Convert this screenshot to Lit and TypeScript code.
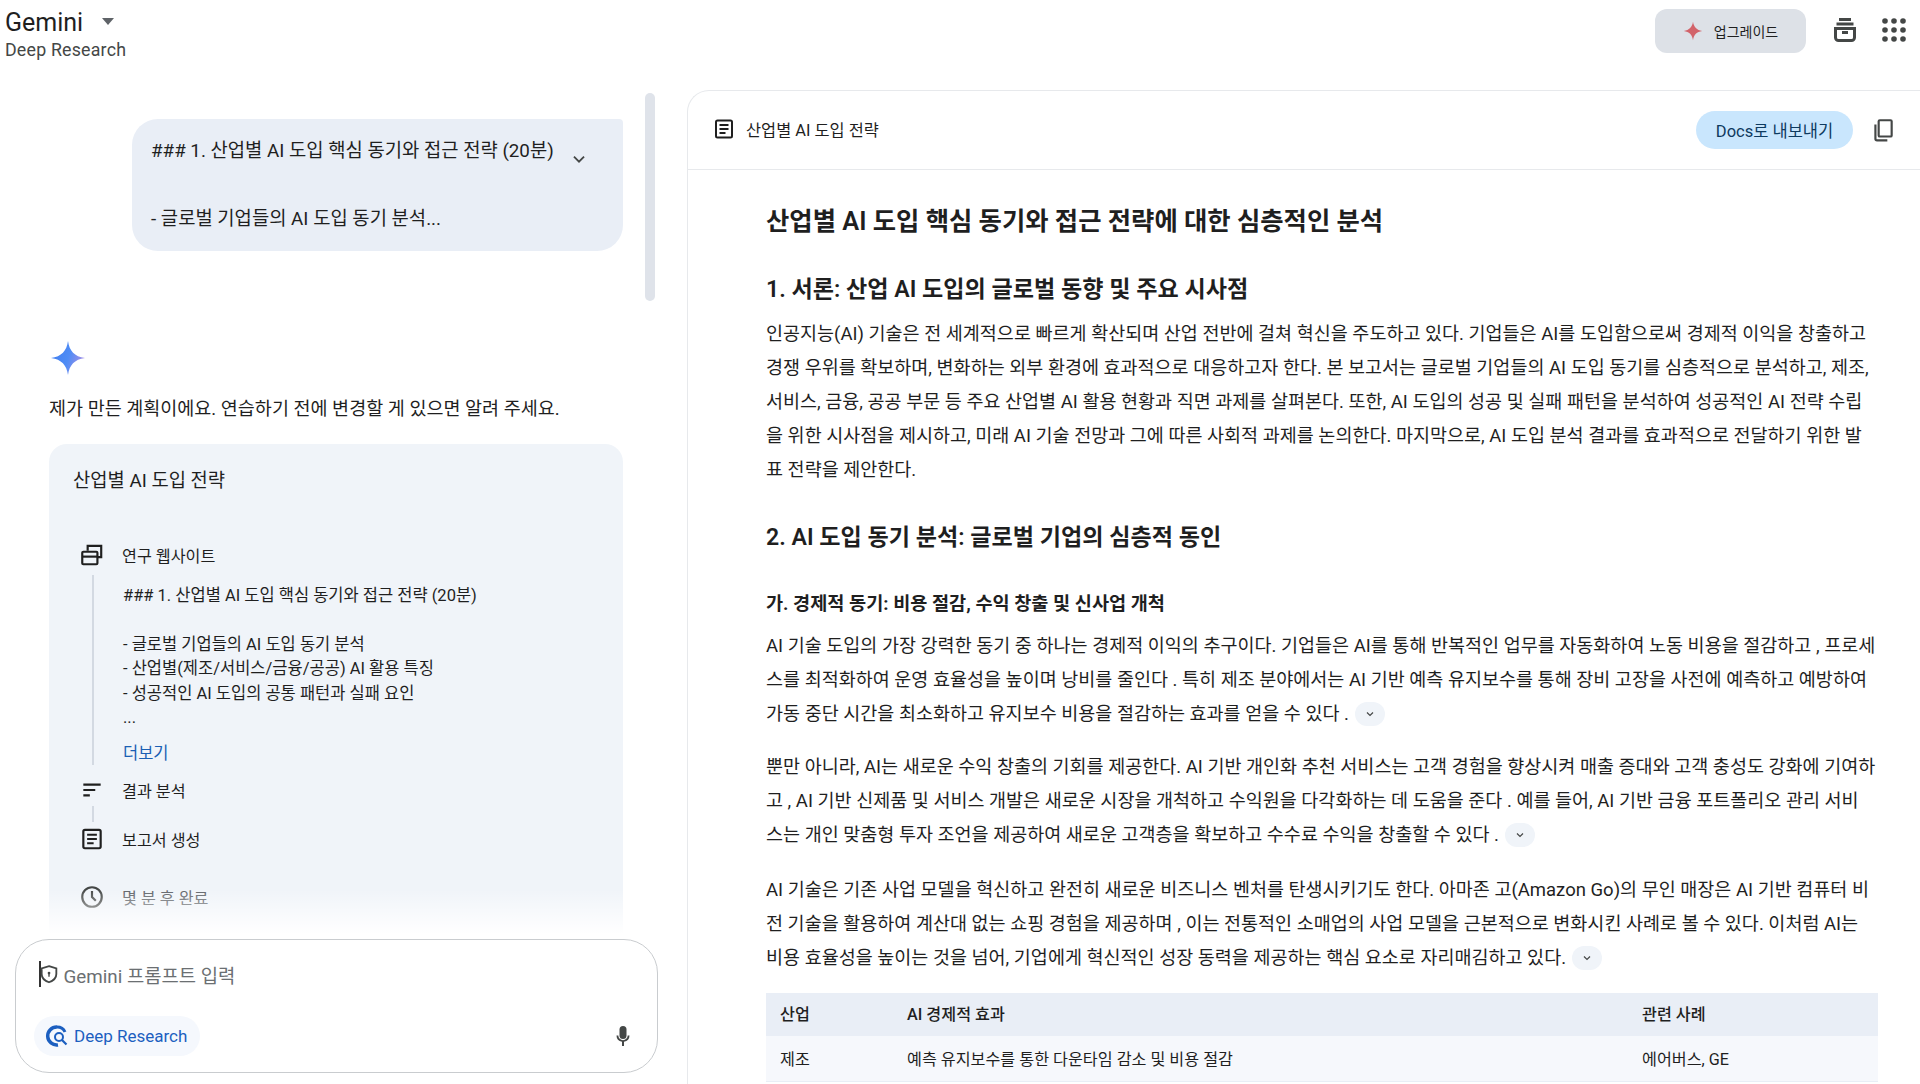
import { LitElement, html, css, svg } from "lit";
import { customElement } from "lit/decorators.js";

const chev = html`<svg class="chev" viewBox="0 0 12 12"><path d="M3 4.5 6 7.5 9 4.5" fill="none" stroke="#444746" stroke-width="1.2"/></svg>`;
const chip = html`<span class="chip">${chev}</span>`;
const docIcon = svg`<rect x="4" y="3.5" width="16" height="17" rx="1.5" fill="none" stroke="#1f1f1f" stroke-width="2"/><path d="M7.5 8h9M7.5 12h9M7.5 16h6" stroke="#1f1f1f" stroke-width="1.8"/>`;

@customElement("app-root")
export class AppRoot extends LitElement {
  static styles = css`
    :host { display: block; width: 1920px; height: 1084px; overflow: hidden; background: #fff; color: #1f1f1f;
      font-family: Roboto, "Noto Sans CJK KR", sans-serif; }
    svg { display: block; flex: none; }
    .page { display: grid; grid-template-rows: 90px 994px; height: 1084px; }
    .top { display: flex; justify-content: space-between; padding: 9px 12px 0 5px; }
    .brand-row { display: flex; align-items: center; gap: 18px; height: 26px; font-size: 25px; color: #1f1f1f; }
    .brand-sub { font-size: 17.800px; color: #444746; margin-top: 4px; letter-spacing: .2px; }
    .top-right { display: flex; align-items: flex-start; }
    .upgrade { width: 151px; height: 44px; border-radius: 12px; background: #dde1e7; display: flex; align-items: center; justify-content: center; gap: 11px; font-size: 14px; color: #1f1f1f; margin-right: 25px; }
    .tray { margin: 7px 21px 0 0; }
    .apps { margin-top: 7px; }
    .main { display: grid; grid-template-columns: 687px 1233px; min-height: 0; }
    .left { position: relative; display: flex; flex-direction: column; min-height: 0; }
    .chat { flex: 1; min-height: 0; overflow: hidden; padding: 29px 0 0 49px; width: 574px; }
    .scrollbar { position: absolute; left: 645px; top: 3px; width: 10px; height: 208px; border-radius: 5px; background: #dfe3ea; }
    .bubble { margin-left: 83px; width: 491px; height: 132px; box-sizing: border-box; background: #e9eef6; border-radius: 26px 4px 26px 26px; padding: 19px 19px; font-size: 18.800px; line-height: 27px; position: relative; display: flex; flex-direction: column; gap: 35.500px; }
    .bubble-first { display: flex; gap: 14px; white-space: nowrap; }
    .bubble-first svg { width: 22px; height: 22px; margin-top: 10px; }
    .spark { margin: 89px 0 0 2px; }
    .intro { font-size: 18.500px; line-height: 26px; margin-top: 20px; white-space: nowrap; }
    .card { margin-top: 22px; background: #f0f4f9; border-radius: 18px 18px 0 0; padding: 23px 24px 0; height: 490px; position: relative; box-sizing: border-box; }
    .card::after { content: ""; position: absolute; left: 0; right: 0; bottom: 0; height: 64px; background: linear-gradient(#f0f4f900, #f0f4f900 30%, #fff 100%); }
    .card-title { font-size: 18.750px; line-height: 28px; }
    .step { display: grid; grid-template-columns: 42px 1fr; align-items: center; font-size: 16.200px; height: 24px; margin-left: 7px; }
    .step svg { width: 26px; height: 26px; margin-left: -1px; }
    .s1 { margin-top: 47px; }
    .detail { margin-left: 19px; border-left: 2px solid #d3d9e2; padding: 9px 0 8px 29px; font-size: 16.500px; line-height: 24.500px; height: 190px; box-sizing: border-box; margin-top: 9px; margin-bottom: 0; }
    .detail .gap { height: 24px; }
    .more { color: #1a5fb4; margin-top: 11px; display: block; }
    .s2 { margin-top: 12px; }
    .link { margin: 5px 0 4px 19px; width: 2px; height: 16px; background: #d3d9e2; }
    .s4 { margin-top: 34px; color: #5f6368; }
    .composer { position: relative; margin: 0 29px 11px 15px; height: 134px; box-sizing: border-box; background: #fff; border: 1.5px solid #c9cccf; border-radius: 34px; padding: 20px 22px 0 17px; display: flex; flex-direction: column; justify-content: space-between; flex: none; }
    .prompt { display: flex; align-items: center; font-size: 18.800px; color: #6b6f72; height: 28px; }
    .caret { width: 1.5px; height: 26px; background: #333; margin-left: 6px; }
    .prompt svg { width: 22px; height: 22px; margin-right: 4px; margin-left: -3px; }
    .tools { display: flex; justify-content: space-between; align-items: center; margin: 0 0 16px 0; }
    .dr { display: flex; align-items: center; gap: 5px; height: 40px; width: 166px; box-sizing: border-box; margin-left: 1px; padding-left: 11px; border-radius: 20px; background: #f5f8fd; color: #1c5fc0; font-size: 17px; }
    .panel { border: 1px solid #e7e9ec; border-right: none; border-bottom: none; border-radius: 22px 0 0 0; min-height: 0; overflow: hidden; }
    .p-head { height: 79px; box-sizing: border-box; border-bottom: 1.5px solid #e7e9ec; display: flex; align-items: center; padding: 0 24px 1px 24px; font-size: 16.400px; }
    .p-head .doc { width: 24px; height: 24px; margin: 0 10px 2px 0; }
    .p-title { margin-bottom: 2px; }
    .grow { flex: 1; }
    .docs { width: 157px; height: 38px; border-radius: 19px; background: #c9e6fd; color: #0e3a5f; font-size: 16.500px; display: flex; align-items: center; justify-content: center; margin-right: 17px; }
    .body { padding: 33px 0 0 78px; width: 1120px; }
    h1 { margin: 0; font-size: 25.350px; font-weight: 600; line-height: 36px; white-space: nowrap; }
    h2 { margin: 0; font-size: 23.100px; font-weight: 600; line-height: 34px; white-space: nowrap; }
    .h2a { margin-top: 34px; }
    .h2b { margin-top: 34.500px; }
    h3 { margin: 36px 0 0; font-size: 18.600px; font-weight: 700; line-height: 26px; white-space: nowrap; }
    p { margin: 0; font-size: 18.500px; line-height: 34px; white-space: nowrap; }
    .p1 { margin-top: 9.500px; }
    .p2 { margin-top: 11.700px; }
    .p3 { margin-top: 19px; }
    .p4 { margin-top: 21px; }
    .chip { display: inline-flex; vertical-align: middle; align-items: center; justify-content: center; width: 30px; height: 24px; border-radius: 12px; background: #f0f4f9; margin-left: 1px; position: relative; top: -1px; }
    .chev { width: 12px; height: 12px; }
    table { border-collapse: collapse; margin-top: 18px; width: 1112px; font-size: 16.200px; table-layout: fixed; }
    th { background: #e9eef6; font-weight: 500; text-align: left; height: 43px; box-sizing: border-box; padding: 0 0 3px 14px; }
    td { background: #f6f8fc; height: 45px; padding: 0 0 0 14px; border-bottom: 1px solid #e9eef6; }
    th.c1 { width: 127px; } th.c3 { width: 250px; }
  `;

  render() {
    return html`<div class="page">
      <header class="top">
        <div>
          <div class="brand-row">Gemini <svg width="14" height="8" viewBox="0 0 14 8"><path d="M1 0h12L7 7z" fill="#5f6368"/></svg></div>
          <div class="brand-sub">Deep Research</div>
        </div>
        <div class="top-right">
          <div class="upgrade"><svg width="20" height="20" viewBox="0 0 24 24"><path d="M12 1c1 6.500 4.500 10 11 11-6.500 1-10 4.500-11 11-1-6.500-4.500-10-11-11 6.500-1 10-4.500 11-11z" fill="#d2636a"/></svg>업그레이드</div>
          <svg class="tray" width="28" height="28" viewBox="0 0 28 28" fill="none" stroke="#444746" stroke-width="3"><path d="M8 3.500h12M5.500 8h17"/><path d="M4.500 12.500h19v9a3 3 0 0 1-3 3h-13a3 3 0 0 1-3-3z"/><path d="M11 16.500h6"/></svg>
          <svg class="apps" width="28" height="28" viewBox="0 0 28 28" fill="#444746">
            ${[5, 14, 23].flatMap((y) => [5, 14, 23].map((x) => svg`<circle cx=${x} cy=${y} r="2.800"/>`))}
          </svg>
        </div>
      </header>
      <div class="main">
        <section class="left">
          <div class="chat">
            <div class="bubble">
              <div class="bubble-first"><span>### 1. 산업별 AI 도입 핵심 동기와 접근 전략 (20분)</span><svg viewBox="0 0 24 24"><path d="M6.500 9.500 12 15l5.500-5.500" fill="none" stroke="#444746" stroke-width="2"/></svg></div>
              <div>- 글로벌 기업들의 AI 도입 동기 분석...</div>
            </div>
            <svg class="spark" width="34" height="36" viewBox="0 0 24 24"><defs><linearGradient id="sg" x1="0" y1="0" x2="1" y2="0.300"><stop offset="0" stop-color="#3f7df0"/><stop offset=".6" stop-color="#4f8cf5"/><stop offset="1" stop-color="#9b8fe8"/></linearGradient></defs><path d="M12 0c1 7 4.500 11 12 12-7.500 1-11 5-12 12-1-7-4.500-11-12-12 7.500-1 11-5 12-12z" fill="url(#sg)"/></svg>
            <div class="intro">제가 만든 계획이에요. 연습하기 전에 변경할 게 있으면 알려 주세요.</div>
            <div class="card">
              <div class="card-title">산업별 AI 도입 전략</div>
              <div class="step s1"><svg viewBox="0 0 24 24" fill="none" stroke="#1f1f1f" stroke-width="2"><path d="M8 8V3.500h12.500V14H17"/><rect x="3" y="9" width="14" height="11.500" rx="1"/><path d="M3 13.500H17"/></svg><span>연구 웹사이트</span></div>
              <div class="detail">
                <div>### 1. 산업별 AI 도입 핵심 동기와 접근 전략 (20분)</div>
                <div class="gap"></div>
                <div>- 글로벌 기업들의 AI 도입 동기 분석</div>
                <div>- 산업별(제조/서비스/금융/공공) AI 활용 특징</div>
                <div>- 성공적인 AI 도입의 공통 패턴과 실패 요인</div>
                <div>...</div>
                <span class="more">더보기</span>
              </div>
              <div class="step s2"><svg viewBox="0 0 24 24" fill="none" stroke="#1f1f1f" stroke-width="2"><path d="M4 7h16M4 12h11M4 17h6"/></svg><span>결과 분석</span></div>
              <div class="link"></div>
              <div class="step"><svg viewBox="0 0 24 24">${docIcon}</svg><span>보고서 생성</span></div>
              <div class="step s4"><svg viewBox="0 0 24 24" fill="none" stroke="#444746" stroke-width="2"><circle cx="12" cy="12" r="9"/><path d="M12 6.500V12l3.500 3.500"/></svg><span>몇 분 후 완료</span></div>
            </div>
          </div>
          <div class="scrollbar"></div>
          <div class="composer">
            <div class="prompt"><span class="caret"></span><svg viewBox="0 0 24 24" fill="none" stroke="#444746" stroke-width="2"><path d="M12 3.500 20 6v6c0 4.500-3.500 7.500-8 9-4.500-1.500-8-4.500-8-9V6z"/><circle cx="12" cy="11" r="1.500" fill="#444746" stroke="none"/><path d="M12 11v4" stroke-width="1.500"/></svg>Gemini 프롬프트 입력</div>
            <div class="tools">
              <div class="dr"><svg width="24" height="24" viewBox="0 0 24 24" fill="none"><path d="M12 3a9 9 0 1 0 1 17.900" stroke="#1c5fc0" stroke-width="3.500"/><path d="M12 3c3 0 6.500 1.500 8 5" stroke="#1c5fc0" stroke-width="3"/><circle cx="14" cy="13" r="4" stroke="#1c5fc0" stroke-width="2"/><path d="m17 16 4.500 4.500" stroke="#1c5fc0" stroke-width="2.200"/></svg>Deep Research</div>
              <svg width="24" height="24" viewBox="0 0 24 24" fill="#444746"><rect x="8.500" y="2" width="7" height="13" rx="3.500"/><path d="M5.500 11.500h1.800a4.700 4.700 0 0 0 9.400 0h1.800a6.500 6.500 0 0 1-5.500 6.300V22h-2v-4.200a6.500 6.500 0 0 1-5.500-6.300z"/></svg>
            </div>
          </div>
        </section>
        <section class="panel">
          <div class="p-head">
            <svg class="doc" viewBox="0 0 24 24">${docIcon}</svg>
            <span class="p-title">산업별 AI 도입 전략</span>
            <span class="grow"></span>
            <div class="docs">Docs로 내보내기</div>
            <svg width="26" height="26" viewBox="0 0 24 24" fill="none" stroke="#444746" stroke-width="2"><rect x="8" y="3" width="12" height="15" rx="1"/><path d="M5 7v13a1.500 1.500 0 0 0 1.500 1.500H16"/></svg>
          </div>
          <div class="body">
            <h1>산업별 AI 도입 핵심 동기와 접근 전략에 대한 심층적인 분석</h1>
            <h2 class="h2a">1. 서론: 산업 AI 도입의 글로벌 동향 및 주요 시사점</h2>
            <p class="p1">인공지능(AI) 기술은 전 세계적으로 빠르게 확산되며 산업 전반에 걸쳐 혁신을 주도하고 있다. 기업들은 AI를 도입함으로써 경제적 이익을 창출하고<br>경쟁 우위를 확보하며, 변화하는 외부 환경에 효과적으로 대응하고자 한다. 본 보고서는 글로벌 기업들의 AI 도입 동기를 심층적으로 분석하고, 제조,<br>서비스, 금융, 공공 부문 등 주요 산업별 AI 활용 현황과 직면 과제를 살펴본다. 또한, AI 도입의 성공 및 실패 패턴을 분석하여 성공적인 AI 전략 수립<br>을 위한 시사점을 제시하고, 미래 AI 기술 전망과 그에 따른 사회적 과제를 논의한다. 마지막으로, AI 도입 분석 결과를 효과적으로 전달하기 위한 발<br>표 전략을 제안한다.</p>
            <h2 class="h2b">2. AI 도입 동기 분석: 글로벌 기업의 심층적 동인</h2>
            <h3>가. 경제적 동기: 비용 절감, 수익 창출 및 신사업 개척</h3>
            <p class="p2">AI 기술 도입의 가장 강력한 동기 중 하나는 경제적 이익의 추구이다. 기업들은 AI를 통해 반복적인 업무를 자동화하여 노동 비용을 절감하고 , 프로세<br>스를 최적화하여 운영 효율성을 높이며 낭비를 줄인다 . 특히 제조 분야에서는 AI 기반 예측 유지보수를 통해 장비 고장을 사전에 예측하고 예방하여<br>가동 중단 시간을 최소화하고 유지보수 비용을 절감하는 효과를 얻을 수 있다 . ${chip}</p>
            <p class="p3">뿐만 아니라, AI는 새로운 수익 창출의 기회를 제공한다. AI 기반 개인화 추천 서비스는 고객 경험을 향상시켜 매출 증대와 고객 충성도 강화에 기여하<br>고 , AI 기반 신제품 및 서비스 개발은 새로운 시장을 개척하고 수익원을 다각화하는 데 도움을 준다 . 예를 들어, AI 기반 금융 포트폴리오 관리 서비<br>스는 개인 맞춤형 투자 조언을 제공하여 새로운 고객층을 확보하고 수수료 수익을 창출할 수 있다 . ${chip}</p>
            <p class="p4">AI 기술은 기존 사업 모델을 혁신하고 완전히 새로운 비즈니스 벤처를 탄생시키기도 한다. 아마존 고(Amazon Go)의 무인 매장은 AI 기반 컴퓨터 비<br>전 기술을 활용하여 계산대 없는 쇼핑 경험을 제공하며 , 이는 전통적인 소매업의 사업 모델을 근본적으로 변화시킨 사례로 볼 수 있다. 이처럼 AI는<br>비용 효율성을 높이는 것을 넘어, 기업에게 혁신적인 성장 동력을 제공하는 핵심 요소로 자리매김하고 있다. ${chip}</p>
            <table>
              <tr><th class="c1">산업</th><th>AI 경제적 효과</th><th class="c3">관련 사례</th></tr>
              <tr><td>제조</td><td>예측 유지보수를 통한 다운타임 감소 및 비용 절감</td><td>에어버스, GE</td></tr>
            </table>
          </div>
        </section>
      </div>
    </div>`;
  }
}
